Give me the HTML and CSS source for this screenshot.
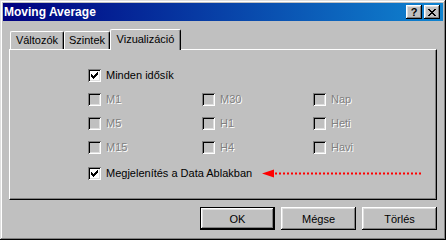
FILE: index.html
```html
<!DOCTYPE html>
<html lang="hu">
<head>
    <meta charset="UTF-8">
    <title>Moving Average</title>
    <link rel="stylesheet" href="styles.css">
</head>
<body>

    <div class="window">
        <div class="titlebar">
            <span class="title">Moving Average</span>
            <span class="tbtn help">?</span>
            <span class="tbtn close">
                <svg width="8" height="7" viewBox="0 0 8 7"><path d="M0 0h2v1h-2z M6 0h2v1h-2z M1 1h2v1h-2z M5 1h2v1h-2z M2 2h4v1h-4z M3 3h2v1h-2z M2 4h4v1h-4z M1 5h2v1h-2z M5 5h2v1h-2z M0 6h2v1h-2z M6 6h2v1h-2z" fill="#000"/></svg>
            </span>
        </div>

        <div class="client">
            <div class="tabs">
                <div class="tab t1">Változók</div>
                <div class="tab t2">Szintek</div>
                <div class="tab active">Vizualizáció</div>
            </div>

            <div class="pane">
                <div class="row">
                    <span class="check on"><svg width="7" height="7" viewBox="0 0 7 7"><path d="M6 0h1v3h-1z M5 1h1v3h-1z M4 2h1v3h-1z M3 3h1v3h-1z M2 4h1v3h-1z M1 3h1v3h-1z M0 2h1v3h-1z" fill="#000"/></svg></span>
                    <span class="label">Minden idősík</span>
                </div>

                <div class="grid">
                    <div class="row"><span class="check off"></span><span class="label dis">M1</span></div>
                    <div class="row"><span class="check off"></span><span class="label dis">M30</span></div>
                    <div class="row"><span class="check off"></span><span class="label dis">Nap</span></div>
                    <div class="row"><span class="check off"></span><span class="label dis">M5</span></div>
                    <div class="row"><span class="check off"></span><span class="label dis">H1</span></div>
                    <div class="row"><span class="check off"></span><span class="label dis">Heti</span></div>
                    <div class="row"><span class="check off"></span><span class="label dis">M15</span></div>
                    <div class="row"><span class="check off"></span><span class="label dis">H4</span></div>
                    <div class="row"><span class="check off"></span><span class="label dis">Havi</span></div>
                </div>

                <div class="row last">
                    <span class="check on"><svg width="7" height="7" viewBox="0 0 7 7"><path d="M6 0h1v3h-1z M5 1h1v3h-1z M4 2h1v3h-1z M3 3h1v3h-1z M2 4h1v3h-1z M1 3h1v3h-1z M0 2h1v3h-1z" fill="#000"/></svg></span>
                    <span class="label">Megjelenítés a Data Ablakban</span>
                    <svg class="arrow" width="162" height="9" viewBox="0 0 162 9">
                        <path d="M0 4.5 L12 0.5 L12 8.5 Z" fill="#ff0000"/>
                        <line x1="13" y1="4.5" x2="160" y2="4.5" stroke="#ff0000" stroke-width="2" stroke-dasharray="2 2"/>
                    </svg>
                </div>
            </div>

            <div class="buttons">
                <div class="btn default">OK</div>
                <div class="btn">Mégse</div>
                <div class="btn">Törlés</div>
            </div>
        </div>
    </div>

</body>
</html>
```

FILE: styles.css
```css
body {
    margin: 0;
    font-family: 'Liberation Sans', Arial, sans-serif;
    font-size: 11px;
    color: #000;
    background: #c0c0c0;
}
.window {
    width: 446px;
    height: 240px;
    box-sizing: border-box;
    padding: 3px;
    background: #c0c0c0;
    box-shadow: inset -1px -1px #000, inset 1px 1px #dfdfdf, inset -2px -2px #808080, inset 2px 2px #fff;
}
.titlebar {
    height: 18px;
    display: flex;
    align-items: center;
    padding: 0 3px 0 1px;
    background: linear-gradient(90deg, #000080, #1084d0);
}
.title {
    flex: 1;
    color: #fff;
    font-weight: bold;
    font-size: 12px;
}
.tbtn {
    width: 16px;
    height: 14px;
    box-sizing: border-box;
    display: flex;
    align-items: center;
    justify-content: center;
    background: #c0c0c0;
    box-shadow: inset -1px -1px #000, inset 1px 1px #fff, inset -2px -2px #808080, inset 2px 2px #dfdfdf;
    font-weight: bold;
    font-size: 11px;
    line-height: 14px;
}
.help {
    margin-right: 2px;
    padding-bottom: 1px;
}
.close svg {
    display: block;
    shape-rendering: crispEdges;
}
.client {
    padding: 0 6px;
}
.tabs {
    display: flex;
    align-items: flex-end;
    height: 20px;
    margin-top: 8px;
    padding-left: 1px;
}
.tab {
    box-sizing: border-box;
    height: 18px;
    border-left: 1px solid #fff;
    border-top: 1px solid #fff;
    border-right: 1px solid #000;
    border-radius: 2px 2px 0 0;
    box-shadow: inset -1px 0 #808080;
    text-align: center;
    line-height: 15px;
    padding-top: 1px;
}
.t1 {
    width: 54px;
}
.t2 {
    width: 46px;
}
.tab.active {
    width: 71px;
    height: 21px;
    margin-bottom: -1px;
    position: relative;
    z-index: 1;
    background: #c0c0c0;
    line-height: 16px;
}
.pane {
    box-sizing: border-box;
    height: 151px;
    border: 1px solid;
    border-color: #fff #000 #000 #fff;
    box-shadow: inset -1px -1px #808080;
    padding: 13px 0 0 78px;
}
.row {
    display: flex;
    align-items: center;
    height: 24px;
}
.grid {
    display: grid;
    grid-template-columns: 114px 111px auto;
}
.row.last {
    margin-top: 2px;
}
.check {
    width: 13px;
    height: 13px;
    box-sizing: border-box;
    flex: none;
    padding: 3px;
    background: #fff;
    box-shadow: inset 1px 1px #808080, inset -1px -1px #fff, inset 2px 2px #000, inset -2px -2px #dfdfdf;
}
.check svg {
    display: block;
    shape-rendering: crispEdges;
}
.check.off {
    background: #c0c0c0;
}
.label {
    margin-left: 5px;
}
.dis {
    color: #808080;
    text-shadow: 1px 1px #fff;
}
.arrow {
    margin-left: 10px;
    display: block;
}
.buttons {
    display: flex;
    justify-content: flex-end;
    gap: 6px;
    margin-top: 7px;
}
.btn {
    width: 75px;
    height: 23px;
    box-sizing: border-box;
    display: flex;
    align-items: center;
    justify-content: center;
    background: #c0c0c0;
    box-shadow: inset -1px -1px #000, inset 1px 1px #fff, inset -2px -2px #808080, inset 2px 2px #dfdfdf;
}
.btn.default {
    border: 1px solid #000;
}
```
